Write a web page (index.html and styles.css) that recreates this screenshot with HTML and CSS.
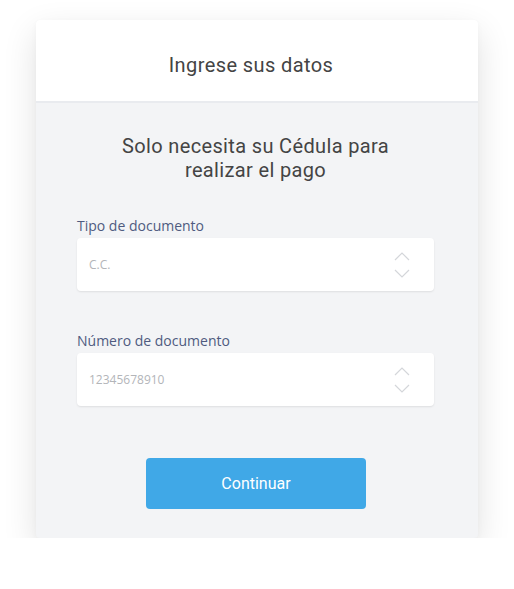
FILE: index.html
```html
<!DOCTYPE html>
<html lang="es">
<head>
<meta charset="utf-8">
<link rel="stylesheet" href="styles.css">
</head>
<body>
<div class="card">
  <div class="card-header">Ingrese sus datos</div>
  <div class="card-body">
    <p class="lead">Solo necesita su Cédula para<br>realizar el pago</p>
    <div class="field">
      <label class="label">Tipo de documento</label>
      <div class="input">
        <span class="value">C.C.</span>
        <svg class="arrows" width="16" height="26" viewBox="0 0 16 26"><path d="M1 8 L8 1 L15 8 M1 18 L8 25 L15 18" fill="none" stroke="#d4d6da" stroke-width="1.2"/></svg>
      </div>
    </div>
    <div class="field field2">
      <label class="label">Número de documento</label>
      <div class="input">
        <span class="value">12345678910</span>
        <svg class="arrows" width="16" height="26" viewBox="0 0 16 26"><path d="M1 8 L8 1 L15 8 M1 18 L8 25 L15 18" fill="none" stroke="#d4d6da" stroke-width="1.2"/></svg>
      </div>
    </div>
    <div class="actions">
      <button class="btn">Continuar</button>
    </div>
  </div>
</div>
</body>
</html>
```
FILE: styles.css
```css
html, body {
  margin: 0;
  padding: 0;
  background: #ffffff;
}
body {
  padding: 20px 36px 0 36px;
  font-family: Roboto, "Liberation Sans", sans-serif;
}
.card {
  width: 442px;
  border-radius: 4px;
  overflow: hidden;
  box-shadow: 0 12px 34px rgba(0, 0, 0, 0.12), 0 2px 6px rgba(0,0,0,0.03);
  background: #f3f4f6;
}
.card-header {
  box-sizing: border-box;
  height: 83px;
  padding-top: 9px;
  padding-right: 12px;
  background: #ffffff;
  border-bottom: 2px solid #e9ebef;
  display: flex;
  align-items: center;
  justify-content: center;
  font-size: 20px;
  color: #444444;
  letter-spacing: 0.4px;
}
.card-body {
  padding: 31px 44px 29px 41px;
}
.lead {
  margin: 0;
  text-align: center;
  font-size: 20px;
  line-height: 24px;
  color: #444444;
  letter-spacing: 0.35px;
}
.field {
  margin-top: 35px;
  display: flex;
  flex-direction: column;
}
.field2 {
  margin-top: 41px;
}
.label {
  font-family: "Open Sans", sans-serif;
  font-size: 14px;
  line-height: 18px;
  color: #4f5b80;
  margin-bottom: 3px;
}
.input {
  height: 53px;
  background: #ffffff;
  border-radius: 4px;
  box-shadow: 0 1px 2px rgba(0, 0, 0, 0.09);
  display: flex;
  align-items: center;
  justify-content: space-between;
  padding: 0 24px 0 12px;
}
.value {
  font-family: "Open Sans", sans-serif;
  font-size: 12px;
  color: #b3b5b9;
}
.arrows {
  display: block;
}
.actions {
  margin-top: 52px;
  display: flex;
  justify-content: center;
}
.btn {
  width: 220px;
  height: 51px;
  margin-left: 1px;
  background: #40a8e7;
  border: none;
  border-radius: 4px;
  color: #ffffff;
  font-family: Roboto, sans-serif;
  font-size: 16px;
}
```
